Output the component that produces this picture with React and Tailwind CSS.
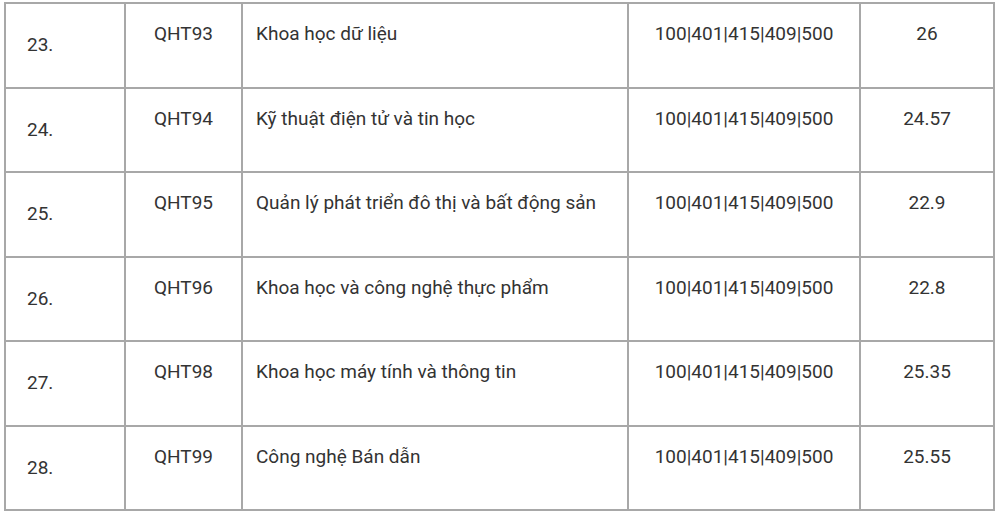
const ROWS = [
  { no: "23.", code: "QHT93", name: "Khoa học dữ liệu", combo: "100|401|415|409|500", score: "26" },
  { no: "24.", code: "QHT94", name: "Kỹ thuật điện tử và tin học", combo: "100|401|415|409|500", score: "24.57" },
  { no: "25.", code: "QHT95", name: "Quản lý phát triển đô thị và bất động sản", combo: "100|401|415|409|500", score: "22.9" },
  { no: "26.", code: "QHT96", name: "Khoa học và công nghệ thực phẩm", combo: "100|401|415|409|500", score: "22.8" },
  { no: "27.", code: "QHT98", name: "Khoa học máy tính và thông tin", combo: "100|401|415|409|500", score: "25.35" },
  { no: "28.", code: "QHT99", name: "Công nghệ Bán dẫn", combo: "100|401|415|409|500", score: "25.55" },
];

const CELL = "border-r-2 border-[#a8a8a8] pt-[16px] leading-[28px]";

export default function App() {
  return (
    <div className="min-h-[514px] bg-white pl-[4px] pt-[2px] text-[19px] text-[#333333]" style={{ fontFamily: "Roboto, 'Noto Sans', sans-serif" }}>
      <div className="w-[991px] border-l-2 border-t-2 border-[#a8a8a8]">
        {ROWS.map((r) => (
          <div key={r.code} className="grid h-[84.5px] grid-cols-[120px_117px_386px_232px_134px] border-b-2 border-[#a8a8a8]">
            <div className="flex items-center border-r-2 border-[#a8a8a8] pl-[21px] leading-[28px]">{r.no}</div>
            <div className={`${CELL} text-center`}>{r.code}</div>
            <div className={`${CELL} pl-[13px]`}>{r.name}</div>
            <div className={`${CELL} text-center`}>{r.combo}</div>
            <div className={`${CELL} text-center`}>{r.score}</div>
          </div>
        ))}
      </div>
    </div>
  );
}
